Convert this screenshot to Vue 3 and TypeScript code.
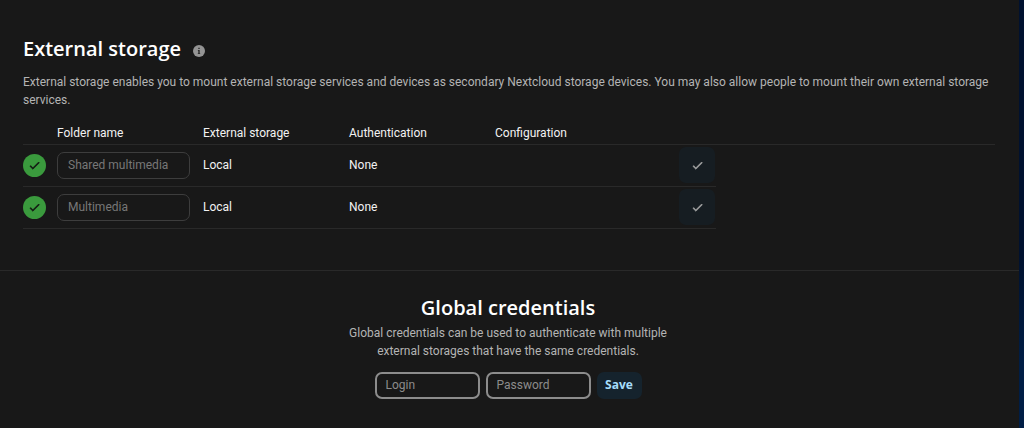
<script setup lang="ts">
import { ref } from 'vue'

interface Mount {
  id: number
  folder: string
  backend: string
  auth: string
}

const mounts = ref<Mount[]>([
  { id: 1, folder: 'Shared multimedia', backend: 'Local', auth: 'None' },
  { id: 2, folder: 'Multimedia', backend: 'Local', auth: 'None' },
])
const login = ref('')
const password = ref('')
</script>

<template>
  <div class="desktop">
    <main class="content">
      <section class="section">
        <div class="title-row">
          <h2>External storage</h2>
          <a class="info" href="#" aria-label="External storage documentation">
            <svg viewBox="0 0 12 12" width="12" height="12" aria-hidden="true">
              <circle cx="6" cy="6" r="6" fill="#949494" />
              <path d="M5.3 2.8h1.4v1.3H5.3zM4.9 5h1.8v3.2h.5v.9H4.8v-.9h.5V5.9h-.4z" fill="#2a2a2a" />
            </svg>
          </a>
        </div>
        <p class="hint">
          External storage enables you to mount external storage services and devices as secondary
          Nextcloud storage devices. You may also allow people to mount their own external storage
          services.
        </p>
        <table>
          <colgroup>
            <col class="c-status" />
            <col class="c-field" />
            <col class="c-field" />
            <col class="c-field" />
            <col class="c-config" />
            <col class="c-action" />
            <col />
          </colgroup>
          <thead>
            <tr>
              <th></th>
              <th scope="col">Folder name</th>
              <th scope="col">External storage</th>
              <th scope="col">Authentication</th>
              <th scope="col">Configuration</th>
              <th></th>
              <th></th>
            </tr>
          </thead>
          <tbody>
            <tr v-for="mount in mounts" :key="mount.id">
              <td>
                <span class="status" role="img" aria-label="Connected">
                  <svg viewBox="0 0 24 24" width="13" height="13" aria-hidden="true">
                    <path d="M21 7 9 19l-5.500-5.500 1.410-1.410L9 16.170 19.590 5.590z" fill="#111" stroke="#111" />
                  </svg>
                </span>
              </td>
              <td>
                <input v-model="mount.folder" class="folder" type="text" aria-label="Folder name" disabled />
              </td>
              <td>{{ mount.backend }}</td>
              <td>{{ mount.auth }}</td>
              <td></td>
              <td>
                <button class="confirm" type="button" aria-label="Save changes">
                  <svg viewBox="0 0 24 24" width="13" height="13" aria-hidden="true">
                    <path d="M21 7 9 19l-5.500-5.500 1.410-1.410L9 16.170 19.590 5.590z" fill="#a8a8a8" stroke="#a8a8a8" />
                  </svg>
                </button>
              </td>
            </tr>
          </tbody>
        </table>
      </section>

      <section class="section credentials">
        <h2>Global credentials</h2>
        <p>Global credentials can be used to authenticate with multiple external storages that have the same credentials.</p>
        <form @submit.prevent>
          <input v-model="login" type="text" placeholder="Login" aria-label="Login" autocomplete="off" />
          <input v-model="password" type="password" placeholder="Password" aria-label="Password" autocomplete="off" />
          <button class="save" type="submit">Save</button>
        </form>
      </section>
    </main>
  </div>
</template>

<style>
body {
  margin: 0;
  background: #181818;
}
</style>

<style scoped>
.desktop {
  box-sizing: border-box;
  min-height: 100vh;
  padding-right: 5px;
  display: flex;
  background: linear-gradient(#00112f 0, #00112f 60%, #001d45 85%);
  font-family: Roboto, 'Noto Sans', sans-serif;
  font-size: 12px;
  line-height: 18px;
  color: #f2f2f2;
}

.content {
  flex: 1;
  background: #181818;
}

.section {
  padding: 36px 24px 41px 23px;
}

h2 {
  margin: 0;
  font-family: 'Open Sans', 'Noto Sans', sans-serif;
  font-size: 20px;
  line-height: 26px;
  font-weight: 600;
  color: #fff;
}

.title-row {
  display: flex;
  align-items: center;
  gap: 12px;
}

.info {
  display: flex;
  margin-top: 4px;
}

.hint {
  margin: 11px 0 14px;
  color: #b4b4b4;
}

table {
  width: 100%;
  table-layout: fixed;
  border-collapse: collapse;
}

.c-status {
  width: 34px;
}

.c-field {
  width: 146px;
}

.c-config {
  width: 184px;
}

.c-action {
  width: 37px;
}

th,
td {
  box-sizing: border-box;
  padding: 0;
  text-align: left;
  font-weight: 400;
  border-bottom: 1px solid #292929;
}

th {
  height: 21px;
}

td {
  height: 42px;
}

.status,
.confirm,
.save {
  display: flex;
  align-items: center;
  justify-content: center;
}

.status {
  width: 23px;
  height: 23px;
  border-radius: 50%;
  background: #3a9a3d;
}

input {
  box-sizing: border-box;
  display: block;
  height: 27px;
  padding: 0 9px;
  border: 2px solid #8c8c8c;
  border-radius: 7px;
  background: #181818;
  font: inherit;
  color: #b4b4b4;
}

input::placeholder {
  color: #8c8c8c;
  opacity: 1;
}

.folder {
  width: 133px;
  padding: 0 10px;
  border: 1px solid #3d3d3d;
  color: #777;
}

button {
  padding: 0;
  border: 0;
  font: inherit;
}

.confirm {
  width: 36px;
  height: 36px;
  border-radius: 7px;
  background: #161d22;
}

.credentials {
  padding: 24px 26px 27px 23px;
  border-top: 1px solid #292929;
  display: flex;
  flex-direction: column;
  align-items: center;
  text-align: center;
}

.credentials p {
  width: 350px;
  margin: 3px 0 12px;
  color: #b4b4b4;
}

form {
  display: flex;
  gap: 6px;
}

form input {
  width: 105px;
}

.save {
  width: 45px;
  height: 27px;
  border-radius: 7px;
  background: #15232d;
  color: #a5dcfa;
  font-family: 'Open Sans', 'Noto Sans', sans-serif;
  font-weight: 700;
}
</style>
